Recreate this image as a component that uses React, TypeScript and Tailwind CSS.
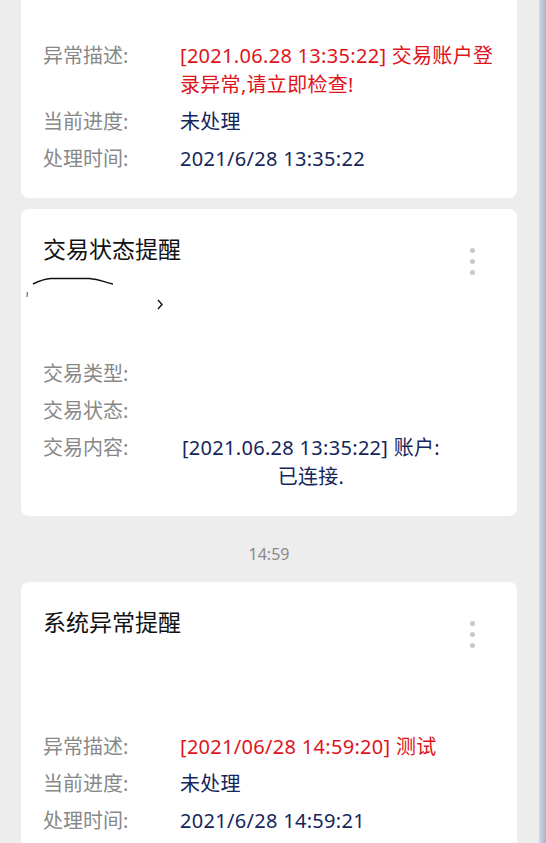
import React from "react"

type Row = {
  label: string
  value?: React.ReactNode
  tone?: "red" | "navy"
  center?: boolean
}

const font = {
  fontFamily: '"Noto Sans", "Noto Sans CJK SC", sans-serif',
}

const Dots = () => (
  <div className="flex flex-col items-center gap-[6px] pt-[15px] h-[32px]">
    <span className="block shrink-0 w-[5px] h-[5px] rounded-full bg-[#c8c8c8]" />
    <span className="block shrink-0 w-[5px] h-[5px] rounded-full bg-[#c8c8c8]" />
    <span className="block shrink-0 w-[5px] h-[5px] rounded-full bg-[#c8c8c8]" />
  </div>
)

const Rows = ({ rows }: { rows: Row[] }) => (
  <div className="flex flex-col gap-[8px]">
    {rows.map((row) => (
      <div key={row.label} className="flex text-[20px] leading-[29px]">
        <span className="w-[137px] shrink-0 text-[#888888]">{row.label}:</span>
        <span
          className={
            row.tone === "red"
              ? "flex-1 tracking-[0.3px] text-[#e0141a]"
              : row.center
                ? "w-[262px] tracking-[0.3px] text-center text-[#15265a]"
                : "flex-1 tracking-[0.3px] text-[#15265a]"
          }
        >
          {row.value}
        </span>
      </div>
    ))}
  </div>
)

const Header = ({ title }: { title: string }) => (
  <div className="flex justify-between items-start h-[32px]">
    <h2 className="text-[23px] leading-[32px] text-[#111]">{title}</h2>
    <Dots />
  </div>
)

// hand-drawn scratch left over in the original screenshot
const Scribble = () => (
  <div className="h-[94px] pt-[7px] -ml-[22px]">
    <svg width="150" height="50" viewBox="0 0 150 50">
      <path
        d="M12 12 C18 9 22 7 30 6.5 L68 6.5 C80 7 84 11 92 12"
        stroke="#111"
        strokeWidth="1.4"
        fill="none"
      />
      <path d="M6.5 20 L6 25" stroke="#777" strokeWidth="1.3" fill="none" />
      <path
        d="M137 28 L141 32.5 L137 37"
        stroke="#111"
        strokeWidth="1.4"
        fill="none"
      />
    </svg>
  </div>
)

const App = () => {
  return (
    <div className="flex w-[546px] h-[843px] overflow-hidden bg-[#ededed]" style={font}>
      <div className="flex-1 flex flex-col pl-[21px] pr-[22px]">
        <section className="shrink-0 bg-white rounded-b-[8px] pt-[41px] pb-[25px] px-[22px]">
          <Rows
            rows={[
              {
                label: "异常描述",
                value: "[2021.06.28 13:35:22] 交易账户登录异常,请立即检查!",
                tone: "red",
              },
              { label: "当前进度", value: "未处理" },
              { label: "处理时间", value: "2021/6/28 13:35:22" },
            ]}
          />
        </section>

        <section className="shrink-0 mt-[11px] bg-white rounded-[8px] pt-[24px] pb-[25px] pl-[22px] pr-[42px]">
          <Header title="交易状态提醒" />
          <Scribble />
          <Rows
            rows={[
              { label: "交易类型" },
              { label: "交易状态" },
              {
                label: "交易内容",
                value: (
                  <>
                    [2021.06.28 13:35:22] 账户:
                    <br />
                    已连接.
                  </>
                ),
                center: true,
              },
            ]}
          />
        </section>

        <div className="shrink-0 h-[66px] pt-[10px] flex items-center justify-center text-[16px] text-[#8a8a8a]">
          14:59
        </div>

        <section className="shrink-0 bg-white rounded-t-[8px] pt-[24px] pb-[25px] pl-[22px] pr-[42px]">
          <Header title="系统异常提醒" />
          <div className="h-[94px]" />
          <Rows
            rows={[
              {
                label: "异常描述",
                value: "[2021/06/28 14:59:20] 测试",
                tone: "red",
              },
              { label: "当前进度", value: "未处理" },
              { label: "处理时间", value: "2021/6/28 14:59:21" },
            ]}
          />
        </section>
      </div>
      <div className="w-[7px] shrink-0 bg-gradient-to-r from-[#cfd7e5] to-[#a9b5cc]" />
    </div>
  )
}

export default App
